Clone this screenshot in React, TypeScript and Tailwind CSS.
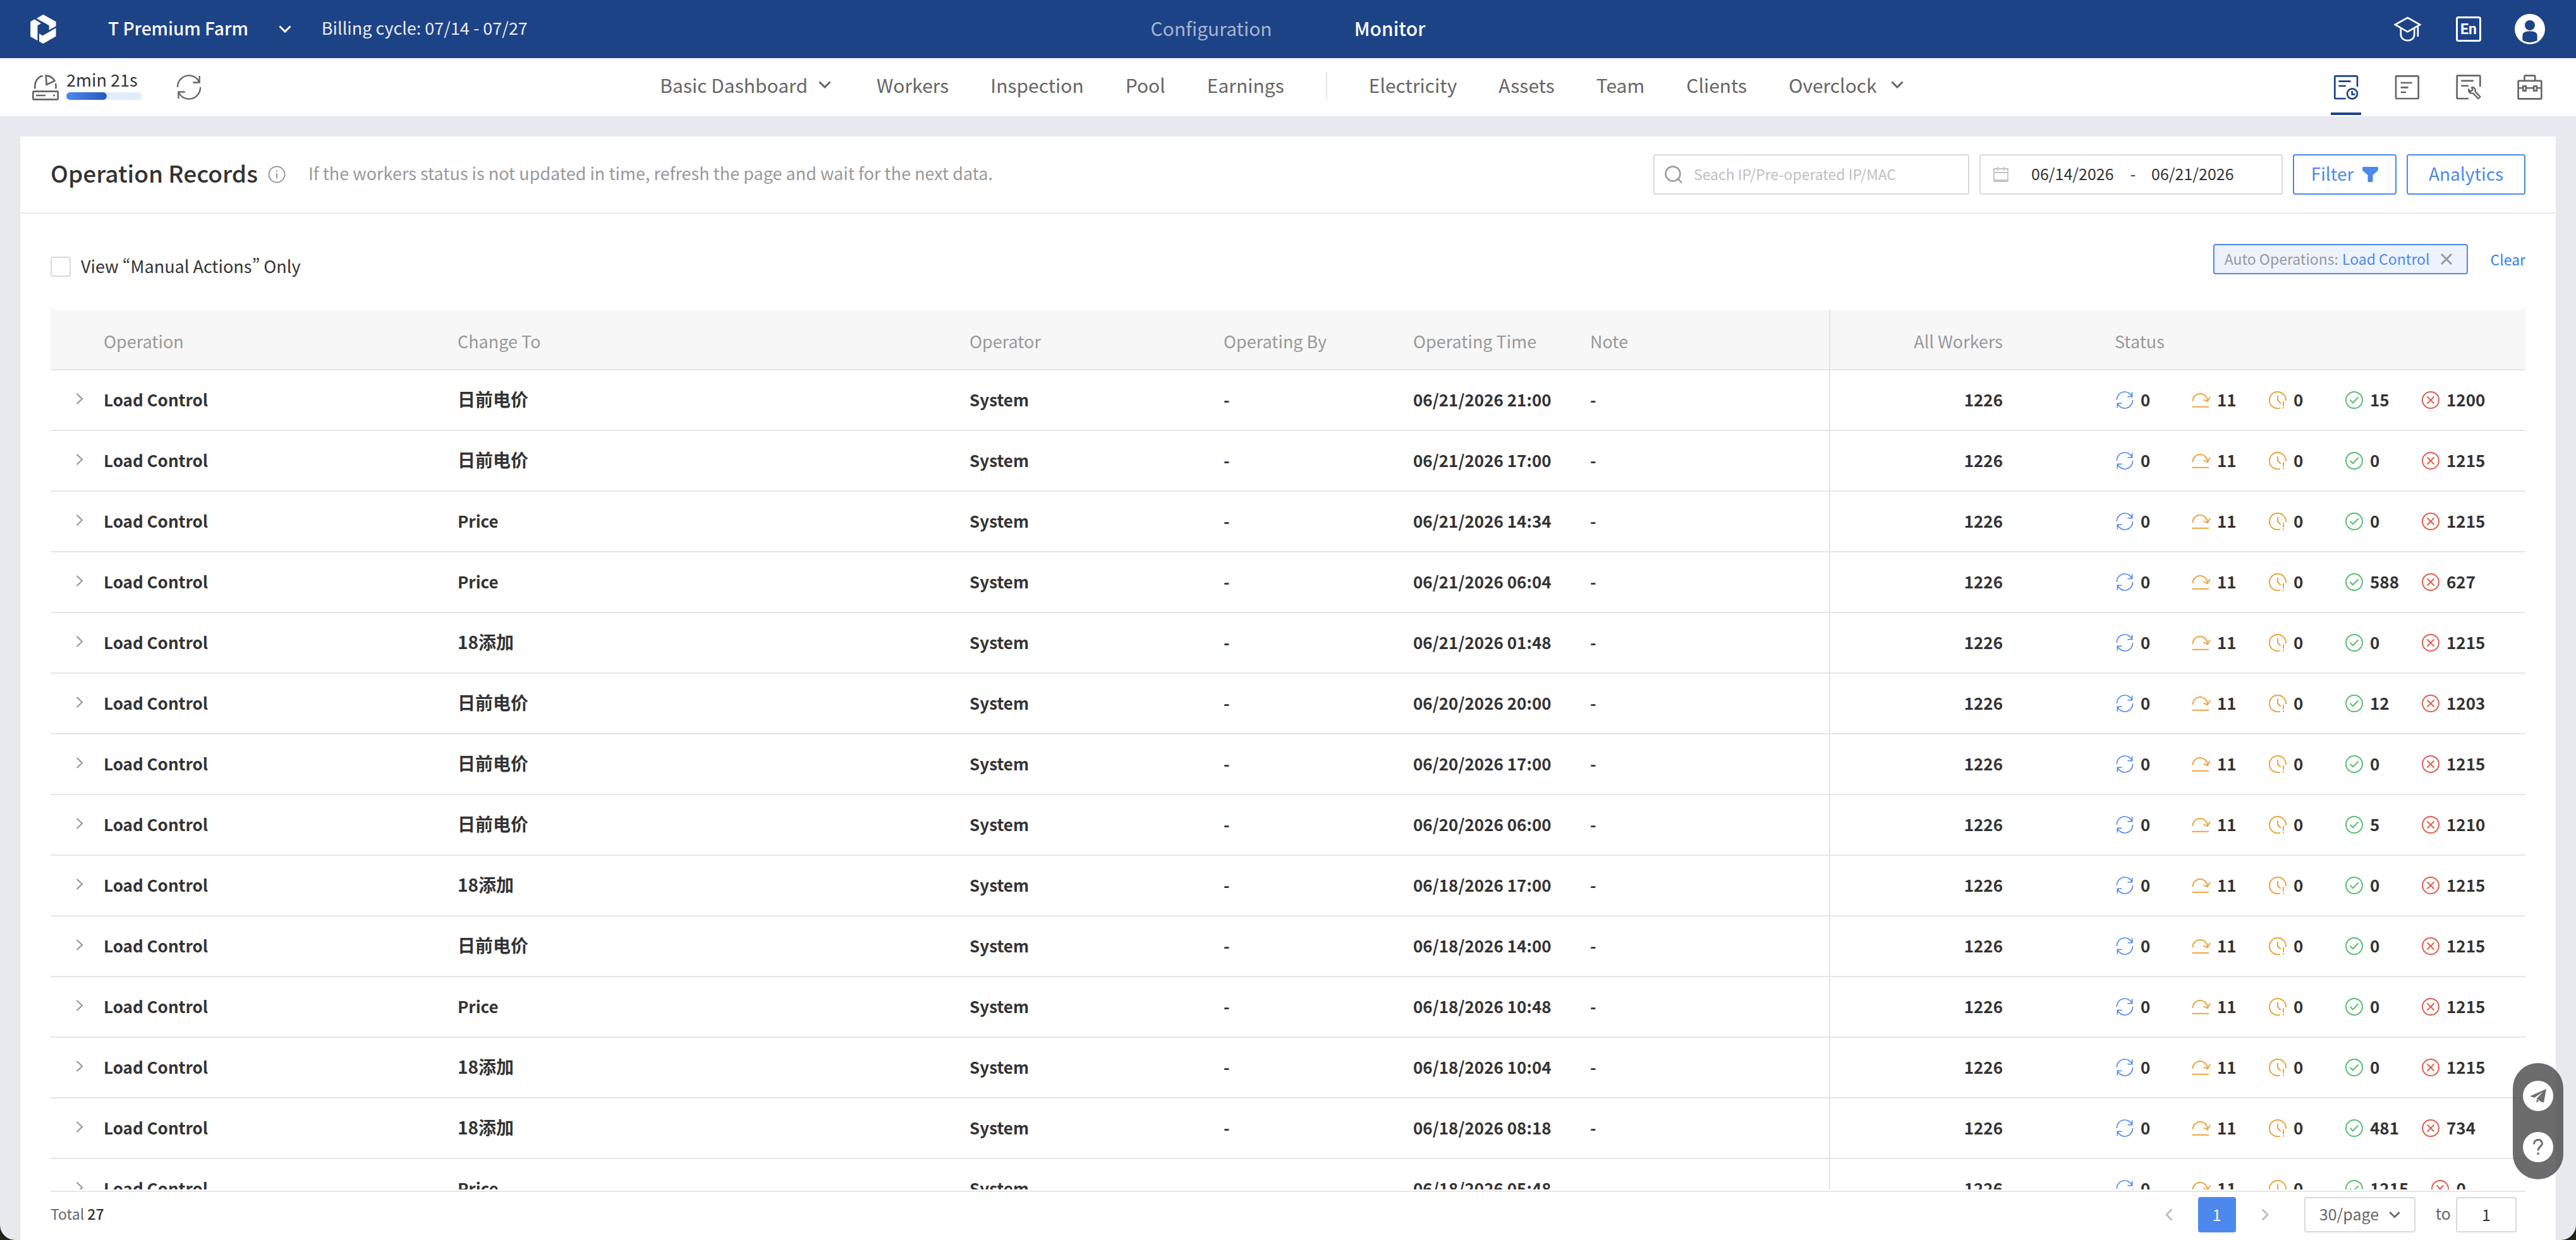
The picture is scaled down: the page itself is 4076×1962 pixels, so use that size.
import { useState } from 'react'
import type { ReactNode } from 'react'

interface OperationRecord {
  changeTo: string
  time: string
  success: number
  failed: number
}

const records: OperationRecord[] = [
  { changeTo: '日前电价', time: '06/21/2026 21:00', success: 15, failed: 1200 },
  { changeTo: '日前电价', time: '06/21/2026 17:00', success: 0, failed: 1215 },
  { changeTo: 'Price', time: '06/21/2026 14:34', success: 0, failed: 1215 },
  { changeTo: 'Price', time: '06/21/2026 06:04', success: 588, failed: 627 },
  { changeTo: '18添加', time: '06/21/2026 01:48', success: 0, failed: 1215 },
  { changeTo: '日前电价', time: '06/20/2026 20:00', success: 12, failed: 1203 },
  { changeTo: '日前电价', time: '06/20/2026 17:00', success: 0, failed: 1215 },
  { changeTo: '日前电价', time: '06/20/2026 06:00', success: 5, failed: 1210 },
  { changeTo: '18添加', time: '06/18/2026 17:00', success: 0, failed: 1215 },
  { changeTo: '日前电价', time: '06/18/2026 14:00', success: 0, failed: 1215 },
  { changeTo: 'Price', time: '06/18/2026 10:48', success: 0, failed: 1215 },
  { changeTo: '18添加', time: '06/18/2026 10:04', success: 0, failed: 1215 },
  { changeTo: '18添加', time: '06/18/2026 08:18', success: 481, failed: 734 },
  { changeTo: 'Price', time: '06/18/2026 05:48', success: 1215, failed: 0 },
]

const totalRecords = 27

const hasChinese = (text: string) => /[\u4e00-\u9fff]/.test(text)

function Chevron({ className }: { className?: string }) {
  return (
    <svg viewBox="0 0 20 12" className={className} fill="none" stroke="currentColor" strokeWidth="3">
      <path d="M1.5 1.5 10 10l8.5-8.5" />
    </svg>
  )
}

function Logo() {
  return (
    <svg viewBox="26 23 123 139" className="w-[41px] h-[46px]" fill="#fff">
      <path d="M26 57 45 46 77 65 60 76V148L26 128Z" />
      <path d="M55 42 87 23 148 57V79L115 97V75Z" />
      <path d="M148 87V127L87 162 68 152V114L84 124Z" />
    </svg>
  )
}

function RefreshIcon({ className }: { className?: string }) {
  return (
    <svg viewBox="717 306 120 120" className={className} fill="none" stroke="currentColor" strokeWidth="7">
      <path d="M723 366A54 54 0 0 1 827 344M827 312V343.500H796" />
      <path d="M831 366A54 54 0 0 1 727 388M727 420V388.500H758" />
    </svg>
  )
}

function MinerTimerIcon() {
  return (
    <svg viewBox="33 308 126 123" className="w-[42px] h-[41px]" fill="none" stroke="#666" strokeWidth="8">
      <rect x="37" y="388" width="118" height="38" rx="3" />
      <path d="M51 407H96M132 407H141M46 375C43 340 60 318 83 314M144 350Q147 362 145 375" />
      <path d="M98 313Q126 315 139 338L101 356Z" />
    </svg>
  )
}

function GraduationIcon() {
  return (
    <svg viewBox="683 78 128 120" className="w-[43px] h-10" fill="none" stroke="#fff" strokeWidth="8">
      <path d="M688 117 747 84 806 117 747 151ZM715 135V164C715 202 779 202 779 164V135M796 122V174" />
    </svg>
  )
}

function AvatarIcon() {
  return (
    <svg viewBox="1257 66 144 144" className="size-12">
      <circle cx="1329" cy="138" r="72" fill="#fff" />
      <circle cx="1329" cy="120" r="24" fill="#1d4387" />
      <path d="M1294 192V168Q1294 148 1329 148T1364 168V192Q1329 211 1294 192Z" fill="#1d4387" />
    </svg>
  )
}

function OperationRecordIcon() {
  return (
    <svg viewBox="390 352 120 120" className="size-10" fill="none" stroke="currentColor" strokeWidth="8">
      <path d="M449 466H401Q397 466 397 462V363Q397 359 401 359H500Q504 359 504 363V410" />
      <path d="M415 384H473M415 406H450M479 430V446H494" />
      <circle cx="480" cy="443" r="24" />
    </svg>
  )
}

function ListIcon() {
  return (
    <svg viewBox="682 352 120 120" className="size-10" fill="none" stroke="currentColor" strokeWidth="8">
      <rect x="688" y="359" width="107" height="107" rx="3" />
      <path d="M711 391H765M711 413H747M711 436H736" />
    </svg>
  )
}

function RepairIcon() {
  return (
    <svg viewBox="977 350 122 122" className="size-10" fill="none" stroke="currentColor" strokeWidth="8">
      <path d="M1038 466H986Q982 466 982 462V359Q982 355 986 355H1090Q1094 355 1094 359V409M1002 380H1062M1002 404H1038" />
      <path
        strokeWidth="7"
        strokeLinejoin="round"
        d="M1053 412Q1067 410 1071 424L1070 432 1094 457 1085 466 1061 441Q1044 442 1039 430L1038 421 1048 431 1058 424Z"
      />
    </svg>
  )
}

function ToolboxIcon() {
  return (
    <svg viewBox="1268 350 122 122" className="size-10" fill="none" stroke="currentColor" strokeWidth="8">
      <rect x="1273" y="380" width="112" height="87" rx="3" />
      <path d="M1303 378V359Q1303 355 1307 355H1350Q1354 355 1354 359V378M1273 415H1385" />
      <rect x="1296" y="406" width="14" height="22" fill="#fff" />
      <rect x="1348" y="406" width="14" height="22" fill="#fff" />
    </svg>
  )
}

function SkipIcon() {
  return (
    <svg viewBox="0 0 28 28" className="size-7 overflow-visible text-[#eaa53c]" fill="none" stroke="currentColor" strokeWidth="2">
      <path d="M0.500 16A11.700 12 0 0 1 24 16M17.500 13.300 24 16.300 28 9M-0.500 24.700H26" />
    </svg>
  )
}

function TimeoutIcon() {
  return (
    <svg viewBox="0 0 28 28" className="size-7 text-[#eaa53c]" fill="none" stroke="currentColor" strokeWidth="2">
      <path d="M18 26.600A13.100 13.100 0 1 1 27 15M14 7V14L18.700 19M23 16.300V23.300M23 25.300V27.500" />
    </svg>
  )
}

function SuccessIcon() {
  return (
    <svg viewBox="0 0 28 28" className="size-7 text-[#5abe73]" fill="none" stroke="currentColor" strokeWidth="2">
      <circle cx="14" cy="14" r="13" />
      <path d="M7.500 13.700 12 18.300 20.500 9.500" />
    </svg>
  )
}

function FailedIcon() {
  return (
    <svg viewBox="0 0 28 28" className="size-7 text-[#e0604f]" fill="none" stroke="currentColor" strokeWidth="2">
      <circle cx="14" cy="14" r="13" />
      <path d="M8.500 8.500 19.500 19.500M19.500 8.500 8.500 19.500" />
    </svg>
  )
}

function StatusItem({ icon, value }: { icon: ReactNode; value: number }) {
  return (
    <span className="flex items-center gap-[11px] min-w-[85px] mr-9 shrink-0">
      {icon}
      <span className="pb-1">{value}</span>
    </span>
  )
}

function TopBar() {
  return (
    <header className="grid grid-cols-[1fr_auto_1fr] items-center h-[92px] shrink-0 bg-[#1d4387] text-white">
      <div className="flex items-center pl-12">
        <Logo />
        <button className="flex items-center gap-12 ml-[82px] text-[28px] font-medium">
          <span className="pb-1">T Premium Farm</span>
          <Chevron className="w-5 h-3" />
        </button>
        <span className="ml-12 pb-1 text-[27px] text-[#ececec]">Billing cycle: 07/14 - 07/27</span>
      </div>
      <nav className="flex gap-[130px] pb-1 text-[30px]">
        <a href="#configuration" className="text-[#a5b4cf]">Configuration</a>
        <a href="#monitor" className="font-medium">Monitor</a>
      </nav>
      <div className="flex items-center justify-end gap-[49px] pr-[49px]">
        <button aria-label="Academy" className="flex justify-center w-12"><GraduationIcon /></button>
        <button className="flex justify-center w-12">
          <span className="flex items-center justify-center size-10 border-3 border-white rounded-sm font-[Roboto,sans-serif] text-[23px] leading-none font-bold">En</span>
        </button>
        <button aria-label="Account"><AvatarIcon /></button>
      </div>
    </header>
  )
}

const primaryLinks = ['Workers', 'Inspection', 'Pool', 'Earnings']
const secondaryLinks = ['Electricity', 'Assets', 'Team', 'Clients']

function SubNav() {
  return (
    <div className="grid grid-cols-[1fr_auto_1fr] items-center h-[92px] shrink-0 bg-white text-[#666]">
      <div className="flex items-center pl-[51px]">
        <MinerTimerIcon />
        <div className="flex flex-col gap-1.5 ml-3 pb-1.5">
          <span className="text-[27px] leading-7 text-[#333]">2min 21s</span>
          <div className="w-[120px] h-3 rounded-full bg-[#e3ecfc]">
            <div className="w-[53%] h-full rounded-full bg-linear-to-r from-[#4b8af0] to-[#2759bb]" />
          </div>
        </div>
        <button aria-label="Refresh" className="ml-[54px]"><RefreshIcon className="size-10" /></button>
      </div>
      <nav className="flex items-center gap-[66px] pb-2 pr-5 text-[30px]">
        <button className="flex items-center gap-[17px] mr-1.5">
          Basic Dashboard
          <Chevron className="w-5 h-3" />
        </button>
        {primaryLinks.map((name) => (
          <a key={name} href={`#${name.toLowerCase()}`}>{name}</a>
        ))}
        <div className="w-0.5 h-11 mt-1 bg-[#e6e6e6]" />
        {secondaryLinks.map((name) => (
          <a key={name} href={`#${name.toLowerCase()}`}>{name}</a>
        ))}
        <button className="flex items-center gap-[22px]">
          Overclock
          <Chevron className="w-5 h-3" />
        </button>
      </nav>
      <div className="flex items-center justify-end gap-[49px] pr-[49px] self-stretch">
        <button aria-label="Operation Records" className="flex flex-col items-center justify-between w-12 h-full pt-[26px] pb-0.5 text-[#1d4387]">
          <OperationRecordIcon />
          <span className="w-12 h-1 bg-[#1d4387]" />
        </button>
        <button aria-label="Logs" className="flex justify-center w-12"><ListIcon /></button>
        <button aria-label="Repairs" className="flex justify-center w-12"><RepairIcon /></button>
        <button aria-label="Toolbox" className="flex justify-center w-12"><ToolboxIcon /></button>
      </div>
    </div>
  )
}

function DateRange() {
  const [start, setStart] = useState('06/14/2026')
  const [end, setEnd] = useState('06/21/2026')

  return (
    <div className="flex items-center w-[480px] h-16 px-5 border-2 border-[#d9d9d9] rounded-sm text-[25px] text-[#333]">
      <svg viewBox="0 0 24 24" className="size-6" fill="none" stroke="#c0c4cc" strokeWidth="1.8">
        <path d="M1 3H23V23H1ZM1 9H23M7 0V6M17 0V6M1 21H23" />
      </svg>
      <input aria-label="Start date" value={start} onChange={(e) => setStart(e.target.value)} className="w-[132px] ml-9 pb-0.5 outline-none" />
      <span className="w-[58px] pb-0.5 text-center">-</span>
      <input aria-label="End date" value={end} onChange={(e) => setEnd(e.target.value)} className="w-[132px] pb-0.5 outline-none" />
    </div>
  )
}

function PanelHeader() {
  return (
    <div className="flex items-center h-[122px] shrink-0 px-12 border-b-2 border-[#e6e6e6]">
      <h1 className="pb-1 text-[37px] font-medium text-[#333]">Operation Records</h1>
      <svg viewBox="0 0 28 28" className="size-7 ml-4" fill="none" stroke="#999" strokeWidth="2">
        <circle cx="14" cy="14" r="12.500" />
        <path d="M14 12V20.500M14 7.500V9.700" />
      </svg>
      <p className="ml-9 pb-1 text-[27px] text-[#999]">
        If the workers status is not updated in time, refresh the page and wait for the next data.
      </p>
      <div className="flex gap-4 ml-auto">
        <label className="flex items-center gap-[18px] w-[500px] h-16 px-4 border-2 border-[#d9d9d9] rounded-sm">
          <svg viewBox="0 0 28 28" className="size-7 shrink-0" fill="none" stroke="#999" strokeWidth="2.500">
            <circle cx="13" cy="13" r="11.500" />
            <path d="M21.500 21 27 27.500" />
          </svg>
          <input aria-label="Search" placeholder="Seach IP/Pre-operated IP/MAC" className="w-full pb-0.5 text-[23px] placeholder:text-[#bfbfbf] outline-none" />
        </label>
        <DateRange />
        <button className="flex items-center justify-center gap-3.5 w-[164px] h-16 border-2 border-[#4d88ec] rounded-sm text-[28px] text-[#4d88ec]">
          <span className="pb-1">Filter</span>
          <svg viewBox="0 0 25 24" className="w-[25px] h-6" fill="currentColor">
            <path d="M1.500 0H23.500Q25 0 25 1.500V4Q25 5.500 24 6.500L16.500 13V24H8.500V13L1 6.500Q0 5.500 0 4V1.500Q0 0 1.500 0Z" />
          </svg>
        </button>
        <button className="w-[188px] h-16 pb-1 border-2 border-[#4d88ec] rounded-sm text-[28px] leading-none text-[#4d88ec]">Analytics</button>
      </div>
    </div>
  )
}

function FilterBar() {
  const [manualOnly, setManualOnly] = useState(false)

  return (
    <div className="flex items-start justify-between shrink-0 px-12 pt-12 pb-13">
      <label className="flex items-center gap-4 h-8 mt-5 text-[27px] text-[#333]">
        <input
          type="checkbox"
          checked={manualOnly}
          onChange={(e) => setManualOnly(e.target.checked)}
          className="appearance-none size-8 border-2 border-[#d9d9d9] rounded-sm checked:bg-[#4d88ec]"
        />
        <span className="pb-0.5 [font-variant-east-asian:proportional-width]">View “Manual Actions” Only</span>
      </label>
      <div className="flex items-center gap-9 h-12 text-[23px]">
        <span className="flex items-center h-12 pl-4 pr-[22px] border-2 border-[#4d88ec] rounded-sm bg-[#ecf3fd]">
          <span className="pb-0.5 text-[#999]">Auto Operations:</span>
          <span className="pl-1.5 pb-0.5 text-[#4d88ec]">Load Control</span>
          <button aria-label="Remove filter" className="ml-4">
            <svg viewBox="0 0 20 20" className="size-5" stroke="#999" strokeWidth="3">
              <path d="M2 2 18 18M18 2 2 18" />
            </svg>
          </button>
        </span>
        <button className="text-[#3a7bec]">Clear</button>
      </div>
    </div>
  )
}

function RecordsTable() {
  return (
    <div className="flex-1 min-h-0 mx-12 mb-0.5 overflow-y-auto [scrollbar-width:none]">
      <table className="w-full table-fixed border-separate border-spacing-0 text-left text-[#333]">
        <colgroup>
          <col className="w-[64px]" />
          <col className="w-[560px]" />
          <col />
          <col className="w-[402px]" />
          <col className="w-[300px]" />
          <col className="w-[280px]" />
          <col className="w-[398px]" />
          <col className="w-[432px]" />
          <col className="w-[670px]" />
        </colgroup>
        <thead className="sticky top-0 text-[27px] text-[#999] [&_th]:h-24 [&_th]:p-0 [&_th]:pl-5 [&_th]:pt-1.5 [&_th]:font-normal [&_th]:bg-[#f7f7f7] [&_th]:border-b-2 [&_th]:border-[#e6e6e6]">
          <tr>
            <th aria-label="Expand" />
            <th>Operation</th>
            <th>Change To</th>
            <th>Operator</th>
            <th>Operating By</th>
            <th>Operating Time</th>
            <th>Note</th>
            <th className="border-l-2 text-right pr-[157px]!">All Workers</th>
            <th>Status</th>
          </tr>
        </thead>
        <tbody className="text-[26px] font-bold [&_td]:h-24 [&_td]:p-0 [&_td]:pl-5 [&_td]:pb-1 [&_td]:border-b-2 [&_td]:border-[#e6e6e6]">
          {records.map((record) => (
            <tr key={record.time}>
              <td>
                <button aria-label="Expand row" className="block ml-5">
                  <svg viewBox="0 0 12 18" className="w-3 h-[18px]" fill="none" stroke="#8c8c8c" strokeWidth="1.800">
                    <path d="M1.500 1 10 9 1.500 17" />
                  </svg>
                </button>
              </td>
              <td>Load Control</td>
              <td className={hasChinese(record.changeTo) ? 'text-[28px]' : undefined}>{record.changeTo}</td>
              <td>System</td>
              <td>-</td>
              <td className="whitespace-nowrap">{record.time}</td>
              <td>-</td>
              <td className="border-l-2 text-right pr-[157px]!">1226</td>
              <td className="pb-0! pl-[22px]!">
                <div className="flex items-center">
                  <StatusItem icon={<RefreshIcon className="size-7 text-[#4d88ec]" />} value={0} />
                  <StatusItem icon={<SkipIcon />} value={11} />
                  <StatusItem icon={<TimeoutIcon />} value={0} />
                  <StatusItem icon={<SuccessIcon />} value={record.success} />
                  <StatusItem icon={<FailedIcon />} value={record.failed} />
                </div>
              </td>
            </tr>
          ))}
        </tbody>
      </table>
    </div>
  )
}

function Pagination() {
  const [page, setPage] = useState('1')

  return (
    <footer className="flex items-center h-[78px] shrink-0 mx-12 pt-2 pr-3.5 pb-3 border-t-2 border-[#e6e6e6] text-[25px] text-[#666]">
      <span className="pb-1 text-[23px]">Total <span className="font-medium text-[#333]">{totalRecords}</span></span>
      <div className="flex items-center gap-4 ml-auto">
        <button aria-label="Previous page" className="flex justify-center w-15 text-[#bfbfbf]">
          <Chevron className="w-5 h-3 rotate-90" />
        </button>
        <button className="w-15 h-14 rounded-sm bg-[#4d88ec] text-white">1</button>
        <button aria-label="Next page" className="flex justify-center w-15 text-[#bfbfbf]">
          <Chevron className="w-5 h-3 -rotate-90" />
        </button>
      </div>
      <div className="relative ml-8">
        <select aria-label="Page size" className="appearance-none w-44 h-14 pl-[22px] pb-0.5 border-2 border-[#d9d9d9] rounded-sm bg-white outline-none">
          <option>30/page</option>
          <option>50/page</option>
          <option>100/page</option>
        </select>
        <Chevron className="absolute right-6 top-[22px] w-[18px] h-3 pointer-events-none" />
      </div>
      <label className="flex items-center gap-2 ml-8">
        <span className="pb-1">to</span>
        <input value={page} onChange={(e) => setPage(e.target.value)} className="w-24 h-14 pb-0.5 border-2 border-[#d9d9d9] rounded-sm text-center text-[#333] outline-none" />
      </label>
    </footer>
  )
}

function FloatingActions() {
  return (
    <div className="fixed right-5 bottom-24 flex flex-col items-center justify-center gap-[33px] w-20 h-[184px] rounded-full bg-[#3b3b3b]/75">
      <button aria-label="Telegram" className="flex items-center justify-center size-12 rounded-full bg-white">
        <svg viewBox="0 0 26 22" className="w-[26px] h-[22px]" fill="#6e6e6e">
          <path d="M26 0 0 11.500 7 14 21 4.500 10.500 15.500 18 20.500 22 21.500ZM10.500 16.500V22L14 19Z" />
        </svg>
      </button>
      <button aria-label="Help" className="flex items-center justify-center size-12 rounded-full bg-white">
        <svg viewBox="0 0 16 25" className="w-4 h-[25px]" fill="none" stroke="#6e6e6e" strokeWidth="3">
          <path d="M1.500 8.500C1.500-0.800 14.500-0.800 14.500 7.500 14.500 12 8 12.500 8 18.500M8 21.500V25" />
        </svg>
      </button>
    </div>
  )
}

export default function App() {
  return (
    <div className="h-screen bg-[#1f2517] font-['Noto_Sans_CJK_SC','Noto_Sans',sans-serif]">
      <div className="flex flex-col h-full overflow-hidden rounded-b-3xl bg-[#e8e9ee]">
        <TopBar />
        <SubNav />
        <main className="flex flex-col flex-1 min-h-0 mx-8 mt-8 bg-white">
          <PanelHeader />
          <FilterBar />
          <RecordsTable />
          <Pagination />
        </main>
      </div>
      <FloatingActions />
    </div>
  )
}
